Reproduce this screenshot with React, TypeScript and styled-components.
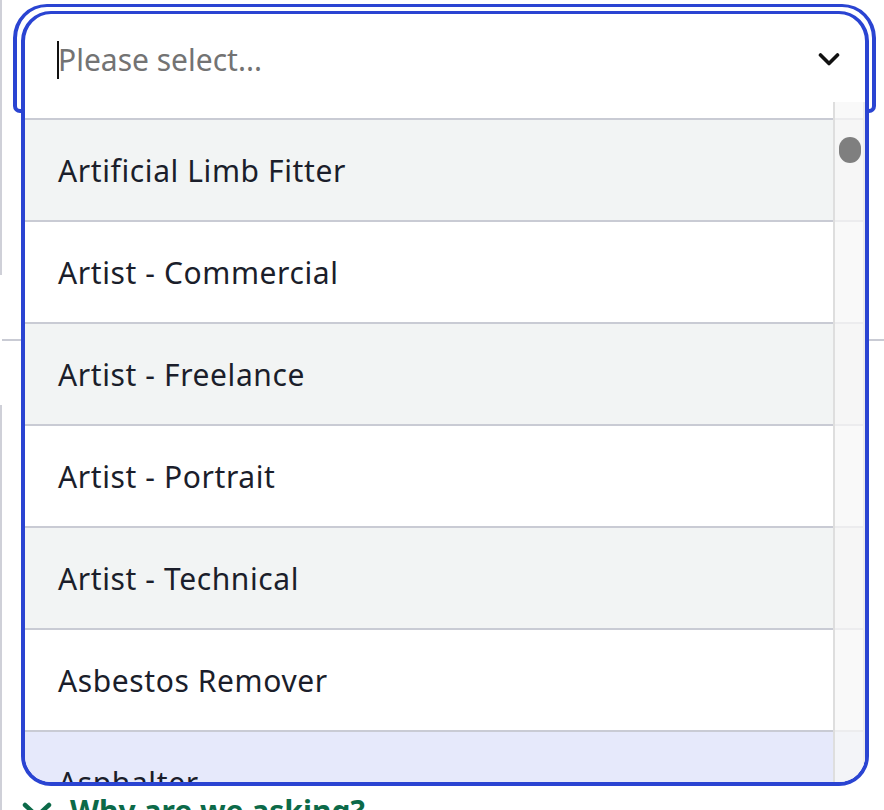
import React from 'react';
import styled, { createGlobalStyle } from 'styled-components';

const BLUE = '#2a44d2';
const LINE = '#c9cbd4';
const INK = '#1b1e2b';

const GlobalStyle = createGlobalStyle`
  html, body {
    margin: 0;
    padding: 0;
    background: #ffffff;
  }
  body {
    font-family: "Noto Sans", "Open Sans", sans-serif;
    overflow: hidden;
  }
  * {
    box-sizing: border-box;
  }
`;

const Page = styled.div`
  width: 884px;
  height: 810px;
  overflow: hidden;
  display: flex;
  background: #ffffff;
`;

// thin border of the card that sits behind the dropdown
const Rail = styled.div`
  width: 2px;
  flex: none;
  display: flex;
  flex-direction: column;
`;

const RailSegment = styled.div<{ $h?: number; $gap?: boolean }>`
  height: ${p => (p.$h ? `${p.$h}px` : 'auto')};
  flex: ${p => (p.$h ? 'none' : '1')};
  background: ${p => (p.$gap ? 'transparent' : '#cfd0d8')};
`;

const Content = styled.div`
  flex: 1;
  display: flex;
  flex-direction: column;
  padding: 4px 8px 0 11px;
`;

// focus ring round the select control
const Field = styled.div`
  position: relative;
  height: 109px;
  flex: none;
  border: 4px solid ${BLUE};
  border-top-width: 3px;
  border-radius: 34px 34px 7px 7px;
  background: #ffffff;
`;

const Dropdown = styled.div`
  position: absolute;
  left: 4px;
  top: 4px;
  width: 848px;
  height: 775px;
  border: 4px solid ${BLUE};
  border-top-width: 3.5px;
  border-radius: 30px;
  background: #ffffff;
  overflow: hidden;
  display: flex;
  flex-direction: column;
  z-index: 2;
`;

const Control = styled.div`
  height: 88px;
  flex: none;
  display: flex;
  align-items: center;
  padding: 4px 25px 0 32px;
`;

const Caret = styled.span`
  width: 2px;
  height: 38px;
  background: #111111;
  flex: none;
`;

const Placeholder = styled.span`
  flex: 1;
  margin-left: -1px;
  font-size: 30px;
  letter-spacing: 0;
  color: #737373;
  line-height: 40px;
`;

const Chevron = styled.svg`
  width: 22px;
  height: 15px;
  flex: none;
  margin-top: -2px;
`;

const List = styled.div`
  position: relative;
  flex: 1;
  overflow: hidden;
  padding-top: 16px;
`;

type Tone = 'grey' | 'white' | 'active';

const Row = styled.div<{ $tone: Tone }>`
  height: 102px;
  flex: none;
  display: flex;
  align-items: center;
  padding-left: 33px;
  border-top: 2px solid ${LINE};
  background: ${p => (p.$tone === 'grey' ? '#f2f4f4' : p.$tone === 'active' ? '#e6e9fb' : '#ffffff')};
  font-size: 30px;
  letter-spacing: 0.6px;
  color: ${INK};
`;

// overlay scrollbar lying over the option rows
const Track = styled.div`
  position: absolute;
  top: 0;
  right: 0;
  bottom: 0;
  width: 32px;
  border-left: 2px solid #dedede;
  border-right: 2px solid #ececec;
  background: rgba(247, 247, 247, 0.75);
  padding: 35px 0 0 4px;
`;

const Thumb = styled.div`
  width: 22px;
  height: 26px;
  border-radius: 11px;
  background: #7f7f7f;
`;

const Divider = styled.div`
  height: 2px;
  flex: none;
  margin: 226px -8px 0 -11px;
  background: ${LINE};
`;

const WhyLink = styled.div`
  margin-top: 450px;
  display: flex;
  align-items: center;
  gap: 18px;
  padding-left: 9px;
  font-size: 30px;
  font-weight: 700;
  line-height: 40px;
  color: #0c6a49;
`;

const LinkIcon = styled.svg`
  width: 30px;
  height: 20px;
  flex: none;
`;

const options: { label: string; tone: Tone }[] = [
  { label: 'Artificial Limb Fitter', tone: 'grey' },
  { label: 'Artist - Commercial', tone: 'white' },
  { label: 'Artist - Freelance', tone: 'grey' },
  { label: 'Artist - Portrait', tone: 'white' },
  { label: 'Artist - Technical', tone: 'grey' },
  { label: 'Asbestos Remover', tone: 'white' },
  { label: 'Asphalter', tone: 'active' },
];

export default function App() {
  return (
    <Page>
      <GlobalStyle />
      <Rail>
        <RailSegment $h={275} />
        <RailSegment $h={130} $gap />
        <RailSegment />
      </Rail>
      <Content>
        <Field>
          <Dropdown>
            <Control>
              <Caret />
              <Placeholder>Please select...</Placeholder>
              <Chevron viewBox="0 0 22 15">
                <path d="M2.5 3 L11 11.5 L19.5 3" fill="none" stroke="#111" strokeWidth="3.6" strokeLinecap="round" strokeLinejoin="round" />
              </Chevron>
            </Control>
            <List>
              {options.map(o => (
                <Row key={o.label} $tone={o.tone}>{o.label}</Row>
              ))}
              <Track>
                <Thumb />
              </Track>
            </List>
          </Dropdown>
        </Field>
        <Divider />
        <WhyLink>
          <LinkIcon viewBox="0 0 30 20">
            <path d="M3 4 L15 15 L27 4" fill="none" stroke="#0c6a49" strokeWidth="4.5" strokeLinecap="round" strokeLinejoin="round" />
          </LinkIcon>
          Why are we asking?
        </WhyLink>
      </Content>
    </Page>
  );
}
